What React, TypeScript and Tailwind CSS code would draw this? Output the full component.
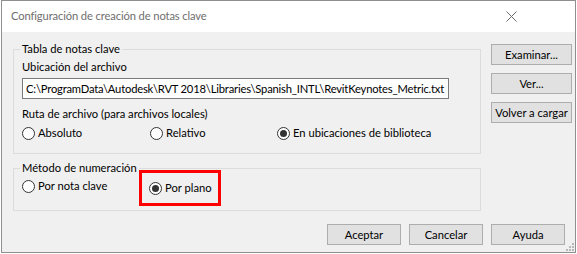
import React from 'react';

function Radio({ label, checked = false }: { label: string; checked?: boolean }) {
  return (
    <div className="flex h-[16px] items-center gap-[3px]">
      <span className="flex h-[13px] w-[13px] shrink-0 items-center justify-center rounded-full border border-[#333333] bg-white">
        {checked && <span className="h-[7px] w-[7px] rounded-full bg-[#333333]" />}
      </span>
      <span className="whitespace-nowrap leading-[16px]">{label}</span>
    </div>
  );
}

function Button({ label, wide = false }: { label: string; wide?: boolean }) {
  return (
    <div
      className={`flex h-[21px] items-center justify-center whitespace-nowrap border border-[#adadad] bg-[#e1e1e1] leading-[16px] ${
        wide ? 'w-[81px]' : 'w-[74px]'
      }`}
    >
      {label}
    </div>
  );
}

export default function App() {
  return (
    <div className="h-[254px] w-[577px] bg-white pl-[1px] font-['Lato','Liberation_Sans',sans-serif] text-[11.2px] text-black">
      <div className="flex h-[253px] w-[575px] flex-col border border-[#8f8f8f] bg-[#f0f0f0]">
        {/* title bar */}
        <div className="flex h-[31px] shrink-0 items-center justify-between bg-white pl-[9px] pr-[58px]">
          <span className="tracking-[-0.12px] text-[#6e6e6e]">Configuración de creación de notas clave</span>
          <svg width="11" height="11" viewBox="0 0 11 11" className="text-[#6b6b6b]">
            <path d="M0.5 0.5 L10.5 10.5 M10.5 0.5 L0.5 10.5" stroke="currentColor" strokeWidth="1" />
          </svg>
        </div>

        <div className="relative flex flex-1 flex-col">
          <div className="flex">
            <div className="ml-[11px] mt-[9px] flex w-[468px] flex-col">
              <fieldset className="m-0 border border-[#dcdcdc] pb-[12px] pl-[8px] pr-0 pt-0">
                <legend className="-ml-[2px] px-[2px] leading-[16px]">Tabla de notas clave</legend>
                <div className="mt-[2px] leading-[16px]">Ubicación del archivo</div>
                <div className="mt-[3px] flex h-[21px] w-[427px] items-center whitespace-nowrap border border-[#7a7a7a] bg-white pl-[3px] leading-[16px] tracking-[-0.18px]">
                  C:\ProgramData\Autodesk\RVT 2018\Libraries\Spanish_INTL\RevitKeynotes_Metric.txt
                </div>
                <div className="mt-[7px] leading-[16px]">Ruta de archivo (para archivos locales)</div>
                <div className="mt-[3px] flex">
                  <div className="w-[128px]">
                    <Radio label="Absoluto" />
                  </div>
                  <div className="w-[127px]">
                    <Radio label="Relativo" />
                  </div>
                  <Radio label="En ubicaciones de biblioteca" checked />
                </div>
              </fieldset>

              <fieldset className="m-0 mt-[6px] border border-[#dcdcdc] pb-[12px] pl-[8px] pr-0 pt-0">
                <legend className="-ml-[2px] px-[2px] leading-[16px]">Método de numeración</legend>
                <div className="mt-[2px] flex">
                  <div className="w-[117px]">
                    <Radio label="Por nota clave" />
                  </div>
                  <div className="-my-[8px] flex h-[36px] w-[82px] items-center border-[3px] border-[#ff0000] pl-[7px]">
                    <Radio label="Por plano" checked />
                  </div>
                </div>
              </fieldset>
            </div>

            <div className="ml-[10px] mt-[12px] flex flex-col gap-[8px]">
              <Button label="Examinar..." wide />
              <Button label="Ver..." wide />
              <Button label="Volver a cargar" wide />
            </div>
          </div>

          <div className="mr-[10px] mt-[13px] flex justify-end gap-[8px]">
            <Button label="Aceptar" />
            <Button label="Cancelar" />
            <Button label="Ayuda" />
          </div>

          {/* resize grip */}
          <svg width="8" height="8" viewBox="0 0 8 8" className="absolute bottom-[1px] right-[1px]">
            <rect x="6" y="0" width="2" height="2" fill="#b8b8b8" />
            <rect x="3" y="3" width="2" height="2" fill="#b8b8b8" />
            <rect x="6" y="3" width="2" height="2" fill="#b8b8b8" />
            <rect x="0" y="6" width="2" height="2" fill="#b8b8b8" />
            <rect x="3" y="6" width="2" height="2" fill="#b8b8b8" />
            <rect x="6" y="6" width="2" height="2" fill="#b8b8b8" />
          </svg>
        </div>
      </div>
    </div>
  );
}
